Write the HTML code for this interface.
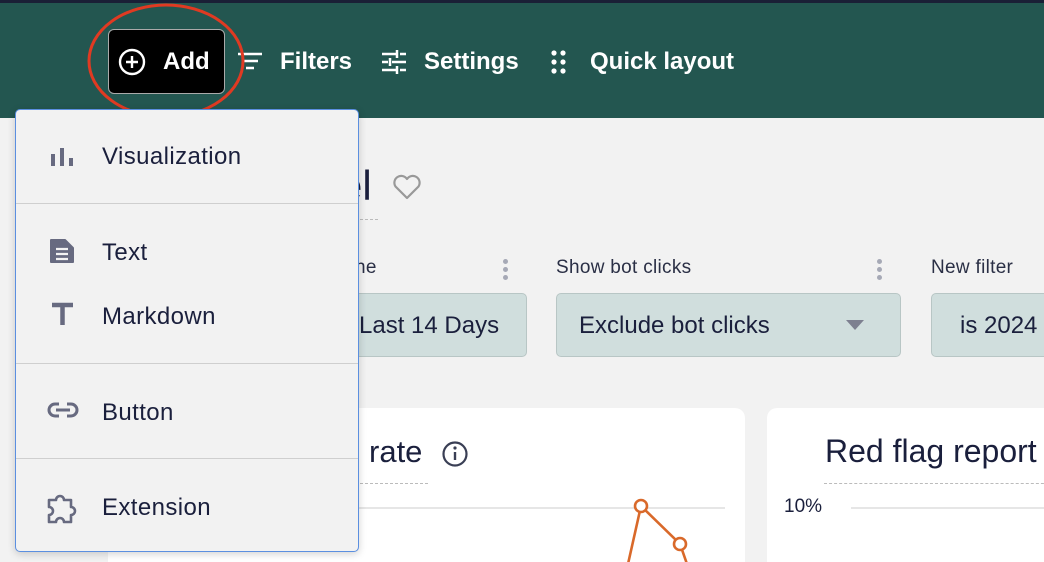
<!DOCTYPE html>
<html><head><style>
*{margin:0;padding:0;box-sizing:border-box}
html,body{width:1044px;height:562px;overflow:hidden}
body{background:#f2f2f2;font-family:"Liberation Sans",sans-serif;position:relative;color:#1a1f3c}
.abs{position:absolute}
.hdr{left:0;top:0;width:1044px;height:118px;background:#235650;border-top:3px solid #1a1f36}
.nav{color:#fff;font-weight:bold;font-size:24px;top:48px}
.menu{left:15px;top:109px;width:344px;height:443px;background:#f2f2f2;border:1.5px solid #5b8fe0;border-radius:5px;box-shadow:0 2px 8px rgba(0,0,0,.18)}
.item{position:absolute;left:86px;font-size:24px;letter-spacing:0.4px;color:#1a1f3c}
.div{position:absolute;left:0;width:100%;height:1px;background:#cfcfcf}
.lbl{font-size:19px;color:#2a2f45;top:257px;letter-spacing:0.3px}
.dd{top:293px;height:64px;background:#d0dedd;border:1px solid #b8c6c5;border-radius:5px;font-size:24px;color:#1a1f3c;padding-top:18px}
.keb{width:5px;height:5px;border-radius:50%;background:#a6a9b6;box-shadow:0 8px 0 #a6a9b6,0 16px 0 #a6a9b6}
.card{background:#fff;border-radius:10px;top:408px;height:170px}
</style></head><body>
<div class="abs hdr"></div>
<div class="abs" style="left:108px;top:29px;width:117px;height:65px;background:#000;border:1px solid #aaa;border-radius:6px"></div>
<svg class="abs" style="left:118px;top:48px" width="28" height="28" viewBox="0 0 28 28"><circle cx="14" cy="14" r="12" fill="none" stroke="#fff" stroke-width="2.4"/><path d="M14 8v12M8 14h12" stroke="#fff" stroke-width="2.4"/></svg>
<div class="abs nav" style="left:163px">Add</div>
<svg class="abs" style="left:237px;top:50px" width="26" height="24"><path d="M1 4h24M5 11h16M9 18h8" stroke="#fff" stroke-width="2.5"/></svg>
<div class="abs nav" style="left:280px">Filters</div>
<svg class="abs" style="left:381px;top:49px" width="26" height="26"><path d="M1 5h14M19 5h6M1 13h6M11 13h14M1 21h14M19 21h6M16 1v8M9 9v8M16 17v8" stroke="#fff" stroke-width="2.5"/></svg>
<div class="abs nav" style="left:424px">Settings</div>
<svg class="abs" style="left:551px;top:50px" width="16" height="24"><g fill="#fff"><circle cx="3" cy="3" r="2.6"/><circle cx="12" cy="3" r="2.6"/><circle cx="3" cy="12" r="2.6"/><circle cx="12" cy="12" r="2.6"/><circle cx="3" cy="21" r="2.6"/><circle cx="12" cy="21" r="2.6"/></g></svg>
<div class="abs nav" style="left:590px">Quick layout</div>

<div class="abs" style="left:339px;top:162px;font-size:42px;color:#1a1f3c">el</div>
<div class="abs" style="left:340px;top:219px;width:38px;border-top:1px dashed #bbb"></div>
<svg class="abs" style="left:392px;top:174px" width="30" height="26"><path d="M15 24 L3.5 12.5 A6.5 6.5 0 0 1 15 5 A6.5 6.5 0 0 1 26.5 12.5 Z" fill="none" stroke="#999" stroke-width="2.2" stroke-linejoin="round"/></svg>

<div class="abs lbl" style="left:355px">ne</div>
<div class="abs keb" style="left:503px;top:259px"></div>
<div class="abs lbl" style="left:556px">Show bot clicks</div>
<div class="abs keb" style="left:877px;top:259px"></div>
<div class="abs lbl" style="left:931px">New filter</div>
<div class="abs dd" style="left:300px;width:227px;padding-left:58px">Last 14 Days</div>
<div class="abs dd" style="left:556px;width:345px;padding-left:22px">Exclude bot clicks</div>
<svg class="abs" style="left:846px;top:320px" width="18" height="11"><path d="M0 0h18L9 10z" fill="#7d8090"/></svg>
<div class="abs dd" style="left:931px;width:130px;padding-left:28px">is 2024</div>

<div class="abs card" style="left:108px;width:637px"></div>
<div class="abs card" style="left:767px;width:290px"></div>
<div class="abs" style="left:369px;top:434px;font-size:31px">rate</div>
<svg class="abs" style="left:441px;top:440px" width="28" height="28"><circle cx="14" cy="14" r="11.5" fill="none" stroke="#3a3f55" stroke-width="2.2"/><path d="M14 12v8" stroke="#3a3f55" stroke-width="2.4"/><circle cx="14" cy="8" r="1.6" fill="#3a3f55"/></svg>
<div class="abs" style="left:340px;top:483px;width:88px;border-top:1px dashed #bbb"></div>
<div class="abs" style="left:340px;top:507px;width:385px;height:2px;background:#e6e6e6"></div>
<svg class="abs" style="left:600px;top:490px" width="120" height="72"><path d="M28 74 L41 16 L80 54 L87 74" fill="none" stroke="#d9692a" stroke-width="2.6"/><circle cx="41" cy="16" r="6" fill="#fff" stroke="#d9692a" stroke-width="2.6"/><circle cx="80" cy="54" r="6" fill="#fff" stroke="#d9692a" stroke-width="2.6"/></svg>
<div class="abs" style="left:825px;top:433px;font-size:32px">Red flag report</div>
<div class="abs" style="left:824px;top:483px;width:230px;border-top:1px dashed #bbb"></div>
<div class="abs" style="left:784px;top:496px;font-size:19px">10%</div>
<div class="abs" style="left:851px;top:507px;width:200px;height:2px;background:#e6e6e6"></div>

<svg class="abs" style="left:86px;top:3px" width="162" height="118"><ellipse cx="80" cy="58" rx="77" ry="56" fill="none" stroke="#e03a22" stroke-width="3"/></svg>

<div class="abs menu">
 <svg class="abs" style="left:34px;top:36px" width="24" height="20"><path d="M3 8v12M12 2v18M21 12v8" stroke="#676a80" stroke-width="4"/></svg>
 <div class="item" style="top:33px">Visualization</div>
 <div class="div" style="top:93px"></div>
 <svg class="abs" style="left:32px;top:127px" width="28" height="28"><path d="M3 3h14l8 8v14H3z" fill="#676a80" stroke="#676a80" stroke-width="2" stroke-linejoin="round"/><path d="M8 12h12M8 17h12M8 22h12" stroke="#f2f2f2" stroke-width="2.2"/></svg>
 <div class="item" style="top:129px">Text</div>
 <svg class="abs" style="left:35px;top:192px" width="24" height="24"><path d="M1 3h21M11.5 3v20" stroke="#676a80" stroke-width="4.5"/></svg>
 <div class="item" style="top:193px">Markdown</div>
 <div class="div" style="top:253px"></div>
 <svg class="abs" style="left:31px;top:291px" width="32" height="18"><path d="M12 3H8a6 6 0 0 0 0 12h4M20 3h4a6 6 0 0 1 0 12h-4M9 9h14" fill="none" stroke="#676a80" stroke-width="3"/></svg>
 <div class="item" style="top:289px">Button</div>
 <div class="div" style="top:348px"></div>
 <svg class="abs" style="left:30px;top:382px" width="32" height="32"><path d="M3 8h7a4 4 0 0 1 8 0h7v7a4 4 0 0 1 0 8v7h-7a4 4 0 0 0-8 0H3v-7a4 4 0 0 0 0-8z" fill="none" stroke="#676a80" stroke-width="2.6" stroke-linejoin="round"/></svg>
 <div class="item" style="top:384px">Extension</div>
</div>
</body></html>
